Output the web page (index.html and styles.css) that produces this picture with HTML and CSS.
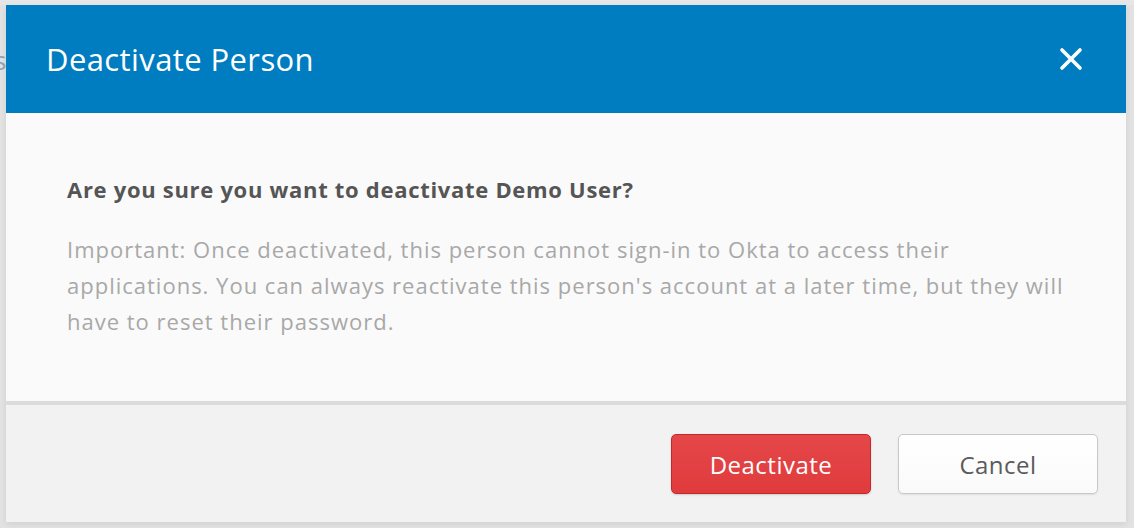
FILE: index.html
```html
<!DOCTYPE html>
<html lang="en">
<head>
<meta charset="utf-8">
<title>Deactivate Person</title>
<link rel="stylesheet" href="styles.css">
</head>
<body>
<div class="backdrop">
  <span class="bg-text">s</span>
  <div class="dialog">
    <header class="dialog-header">
      <h1 class="dialog-title">Deactivate Person</h1>
      <button class="close-btn" aria-label="Close">
        <svg width="24" height="24" viewBox="0 0 24 24"><path d="M3 3 L21 21 M21 3 L3 21" stroke="#fff" stroke-width="3.6" stroke-linecap="round" fill="none"/></svg>
      </button>
    </header>
    <section class="dialog-body">
      <p class="question">Are you sure you want to deactivate Demo User?</p>
      <p class="note">Important: Once deactivated, this person cannot sign-in to Okta to access their applications. You can always reactivate this person's account at a later time, but they will have to reset their password.</p>
    </section>
    <footer class="dialog-footer">
      <button class="btn btn-danger">Deactivate</button>
      <button class="btn btn-default">Cancel</button>
    </footer>
  </div>
</div>
</body>
</html>
```
FILE: styles.css
```css
* { box-sizing: border-box; }
html, body { margin: 0; padding: 0; }
body {
  width: 1134px;
  height: 528px;
  overflow: hidden;
  background: #e2e2e2;
  font-family: "Open Sans", "Lato", sans-serif;
}
.backdrop {
  position: relative;
  padding: 5px 8px 0 6px;
  height: 528px;
  background: linear-gradient(#e6e6e6 0, #e6e6e6 5px, #e2e2e2 5px);
}
.bg-text {
  position: absolute;
  left: -6px;
  top: 42px;
  font-size: 26px;
  color: #8fa6bb;
}
.dialog {
  position: relative;
  width: 1120px;
  box-shadow: 0 2px 6px rgba(0,0,0,0.08);
}
.dialog-header {
  height: 108px;
  background: #007cc1;
  display: flex;
  align-items: center;
  justify-content: space-between;
  padding: 0 43px 0 40px;
}
.dialog-title {
  margin: 0;
  font-weight: 400;
  font-size: 31px;
  color: #fff;
  letter-spacing: 0.4px;
  padding-bottom: 1px;
}
.close-btn {
  background: none;
  border: 0;
  padding: 0;
  width: 24px;
  height: 24px;
  cursor: pointer;
  display: block;
}
.close-btn svg { display: block; }
.dialog-body {
  background: #fafafa;
  padding: 61px 50px 40px 61px;
  height: 292px;
  border-bottom: 4px solid #dcdcdc;
}
.question {
  margin: 0 0 27px;
  font-size: 22px;
  font-weight: 700;
  letter-spacing: 0.7px;
  color: #555;
}
.note {
  margin: 0;
  font-size: 22px;
  line-height: 36px;
  letter-spacing: 1px;
  color: #a8a8a8;
}
.dialog-footer {
  background: #f2f2f2;
  height: 117px;
  display: flex;
  justify-content: flex-end;
  align-items: flex-start;
  gap: 27px;
  padding: 29px 28px 0 0;
}
.btn {
  width: 200px;
  height: 60px;
  border-radius: 5px;
  font-family: inherit;
  font-size: 24px;
  letter-spacing: 0.5px;
  cursor: pointer;
}
.btn-danger {
  background: linear-gradient(#e54749, #e03b3d);
  border: 1px solid #c5272b;
  color: #fff;
  box-shadow: 0 1px 2px rgba(0,0,0,0.15);
}
.btn-default {
  background: linear-gradient(#fff, #fafafa);
  border: 1px solid #c8c8c8;
  color: #5b5b5b;
  box-shadow: 0 1px 2px rgba(0,0,0,0.08);
}
```
